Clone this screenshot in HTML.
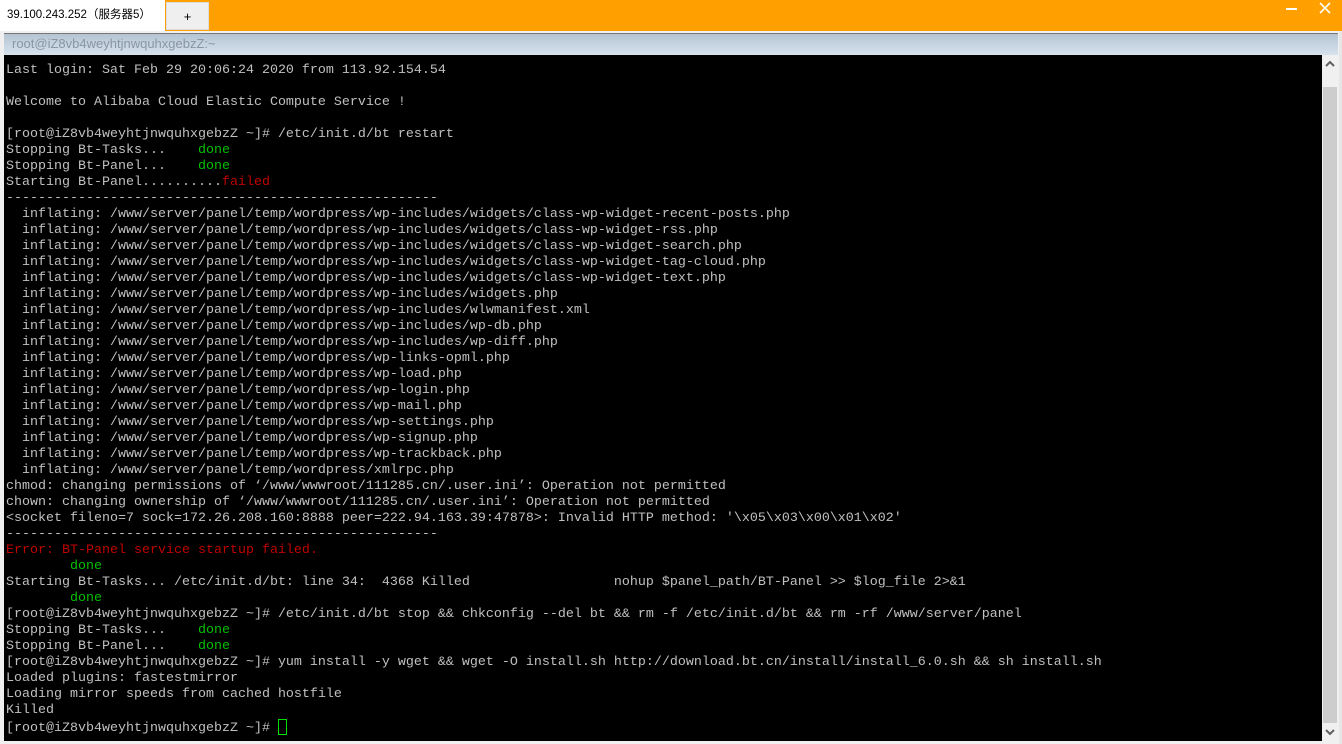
<!DOCTYPE html>
<html><head><meta charset="utf-8"><style>
html,body{margin:0;padding:0;width:1342px;height:744px;overflow:hidden;background:#ffa000;position:relative;font-family:"Liberation Sans","Noto Sans CJK SC",sans-serif}
.tab{position:absolute;left:0;top:0;width:165px;height:31px;background:#fff;font-size:11.5px;line-height:30px;padding-left:7px;box-sizing:border-box;color:#000;white-space:nowrap;overflow:hidden;font-family:"Liberation Sans","Noto Sans CJK SC",sans-serif}
.plus{position:absolute;left:166px;top:2px;width:43px;height:28px;background:#efefef;border:1px solid #ddd;box-sizing:border-box;text-align:center;line-height:27px;font-size:13px}
.win{position:absolute;left:0;top:31px;width:1342px;height:713px;background:#f0f0f0}
.title{position:absolute;left:4px;top:33px;width:1334px;height:22px;background:linear-gradient(#b6c4d2,#d6e2ee);border-top:1px solid #777;box-sizing:border-box;color:#8a96a2;font-size:13px;line-height:20px;padding-left:8px}
.term{position:absolute;left:4px;top:55px;width:1318px;height:686px;background:#000}
pre{position:absolute;left:6px;top:63px;margin:0;font-family:"Liberation Mono",monospace;font-size:13.33px;line-height:16px;color:#c0c0c0}
.g{color:#00c000}.r{color:#c00000}
.cur{display:inline-block;width:7px;height:14px;border:1px solid #00e000;vertical-align:-4px}
.sb{position:absolute;left:1322px;top:55px;width:16px;height:686px;background:#f0f0f0}
.th{position:absolute;left:1323px;top:87px;width:14px;height:636px;background:#cdcdcd}
.rb{position:absolute;left:1339px;top:31px;width:3px;height:713px;background:#e6e6e6}
</style></head><body>
<div class="tab">39.100.243.252（服务器5）</div>
<div class="plus">+</div>
<svg style="position:absolute;left:1284px;top:7px" width="16" height="4"><rect x="2" y="1" width="11" height="2" fill="#fff"/></svg>
<svg style="position:absolute;left:1318px;top:1px" width="14" height="14"><path d="M2 2L12 12M12 2L2 12" stroke="#fff" stroke-width="1.6"/></svg>
<div class="win"></div>
<div class="title">root@iZ8vb4weyhtjnwquhxgebzZ:~</div>
<div class="term"></div>
<div class="sb"></div><div class="th"></div><div class="rb"></div>
<svg style="position:absolute;left:1324px;top:60px" width="12" height="8"><path d="M2 6L6 2L10 6" stroke="#606060" stroke-width="2" fill="none"/></svg>
<svg style="position:absolute;left:1324px;top:728px" width="12" height="8"><path d="M2 2L6 6L10 2" stroke="#606060" stroke-width="2" fill="none"/></svg>
<pre>Last login: Sat Feb 29 20:06:24 2020 from 113.92.154.54

Welcome to Alibaba Cloud Elastic Compute Service !

[root@iZ8vb4weyhtjnwquhxgebzZ ~]# /etc/init.d/bt restart
Stopping Bt-Tasks...    <span class="g">done</span>
Stopping Bt-Panel...    <span class="g">done</span>
Starting Bt-Panel..........<span class="r">failed</span>
------------------------------------------------------
  inflating: /www/server/panel/temp/wordpress/wp-includes/widgets/class-wp-widget-recent-posts.php
  inflating: /www/server/panel/temp/wordpress/wp-includes/widgets/class-wp-widget-rss.php
  inflating: /www/server/panel/temp/wordpress/wp-includes/widgets/class-wp-widget-search.php
  inflating: /www/server/panel/temp/wordpress/wp-includes/widgets/class-wp-widget-tag-cloud.php
  inflating: /www/server/panel/temp/wordpress/wp-includes/widgets/class-wp-widget-text.php
  inflating: /www/server/panel/temp/wordpress/wp-includes/widgets.php
  inflating: /www/server/panel/temp/wordpress/wp-includes/wlwmanifest.xml
  inflating: /www/server/panel/temp/wordpress/wp-includes/wp-db.php
  inflating: /www/server/panel/temp/wordpress/wp-includes/wp-diff.php
  inflating: /www/server/panel/temp/wordpress/wp-links-opml.php
  inflating: /www/server/panel/temp/wordpress/wp-load.php
  inflating: /www/server/panel/temp/wordpress/wp-login.php
  inflating: /www/server/panel/temp/wordpress/wp-mail.php
  inflating: /www/server/panel/temp/wordpress/wp-settings.php
  inflating: /www/server/panel/temp/wordpress/wp-signup.php
  inflating: /www/server/panel/temp/wordpress/wp-trackback.php
  inflating: /www/server/panel/temp/wordpress/xmlrpc.php
chmod: changing permissions of ‘/www/wwwroot/111285.cn/.user.ini’: Operation not permitted
chown: changing ownership of ‘/www/wwwroot/111285.cn/.user.ini’: Operation not permitted
&lt;socket fileno=7 sock=172.26.208.160:8888 peer=222.94.163.39:47878&gt;: Invalid HTTP method: '\x05\x03\x00\x01\x02'
------------------------------------------------------
<span class="r">Error: BT-Panel service startup failed.</span>
        <span class="g">done</span>
Starting Bt-Tasks... /etc/init.d/bt: line 34:  4368 Killed                  nohup $panel_path/BT-Panel &gt;&gt; $log_file 2&gt;&amp;1
        <span class="g">done</span>
[root@iZ8vb4weyhtjnwquhxgebzZ ~]# /etc/init.d/bt stop &amp;&amp; chkconfig --del bt &amp;&amp; rm -f /etc/init.d/bt &amp;&amp; rm -rf /www/server/panel
Stopping Bt-Tasks...    <span class="g">done</span>
Stopping Bt-Panel...    <span class="g">done</span>
[root@iZ8vb4weyhtjnwquhxgebzZ ~]# yum install -y wget &amp;&amp; wget -O install.sh http://download.bt.cn/install/install_6.0.sh &amp;&amp; sh install.sh
Loaded plugins: fastestmirror
Loading mirror speeds from cached hostfile
Killed
[root@iZ8vb4weyhtjnwquhxgebzZ ~]# <span class="cur"></span></pre>
</body></html>
